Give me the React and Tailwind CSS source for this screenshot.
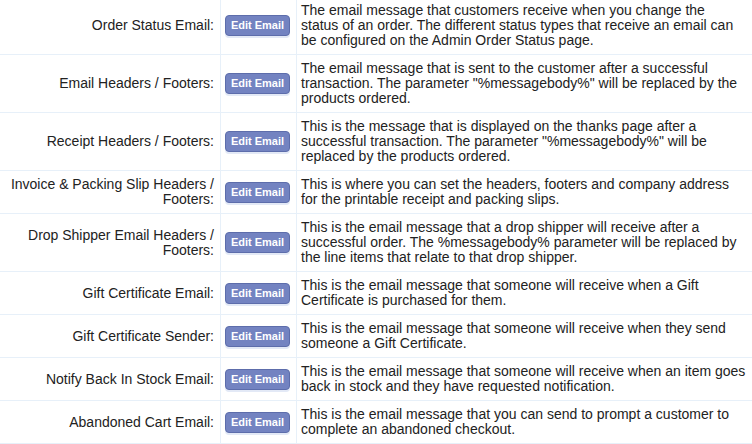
const rows = [
  {
    label: "Order Status Email:",
    desc: (
      <>
        The email message that customers receive when you change the
        <br />
        status of an order. The different status types that receive an email
        can be configured on the Admin Order Status page.
      </>
    ),
  },
  {
    label: "Email Headers / Footers:",
    desc: 'The email message that is sent to the customer after a successful transaction. The parameter "%messagebody%" will be replaced by the products ordered.',
  },
  {
    label: "Receipt Headers / Footers:",
    desc: 'This is the message that is displayed on the thanks page after a successful transaction. The parameter "%messagebody%" will be replaced by the products ordered.',
  },
  {
    label: "Invoice & Packing Slip Headers / Footers:",
    desc: (
      <>
        This is where you can set the headers, footers and company address
        <br />
        for the printable receipt and packing slips.
      </>
    ),
  },
  {
    label: "Drop Shipper Email Headers / Footers:",
    desc: "This is the email message that a drop shipper will receive after a successful order. The %messagebody% parameter will be replaced by the line items that relate to that drop shipper.",
  },
  {
    label: "Gift Certificate Email:",
    desc: "This is the email message that someone will receive when a Gift Certificate is purchased for them.",
  },
  {
    label: "Gift Certificate Sender:",
    desc: "This is the email message that someone will receive when they send someone a Gift Certificate.",
  },
  {
    label: "Notify Back In Stock Email:",
    desc: "This is the email message that someone will receive when an item goes back in stock and they have requested notification.",
  },
  {
    label: "Abandoned Cart Email:",
    desc: "This is the email message that you can send to prompt a customer to complete an abandoned checkout.",
  },
];

const EditButton = () => (
  <button className="h-[21px] w-[65px] rounded-[4px] border border-[#5d6dab] bg-[#7383c1] text-[11px] font-bold text-white shadow-[0_2px_0_#e3e9f6] font-['Liberation_Sans',Arial,sans-serif]">
    Edit Email
  </button>
);

export default function App() {
  return (
    <div className="h-[444px] w-[752px] overflow-hidden bg-white font-['Liberation_Sans',Arial,sans-serif] text-[14px] leading-[15px] text-[#222]">
      <div className="-mt-[3px]">
        {rows.map((row) => (
          <div
            key={row.label}
            className="grid grid-cols-[221px_76px_455px] border-b border-[#e7f0f9]"
          >
            <div className="flex items-center justify-end border-r border-[#e7f0f9] py-[6px] pl-[8px] pr-[6px] text-right">
              {row.label}
            </div>
            <div className="flex items-center border-r border-[#e7f0f9] pl-[4px]">
              <EditButton />
            </div>
            <div className="py-[6px] pl-[4px] pr-[2px]">{row.desc}</div>
          </div>
        ))}
      </div>
    </div>
  );
}
